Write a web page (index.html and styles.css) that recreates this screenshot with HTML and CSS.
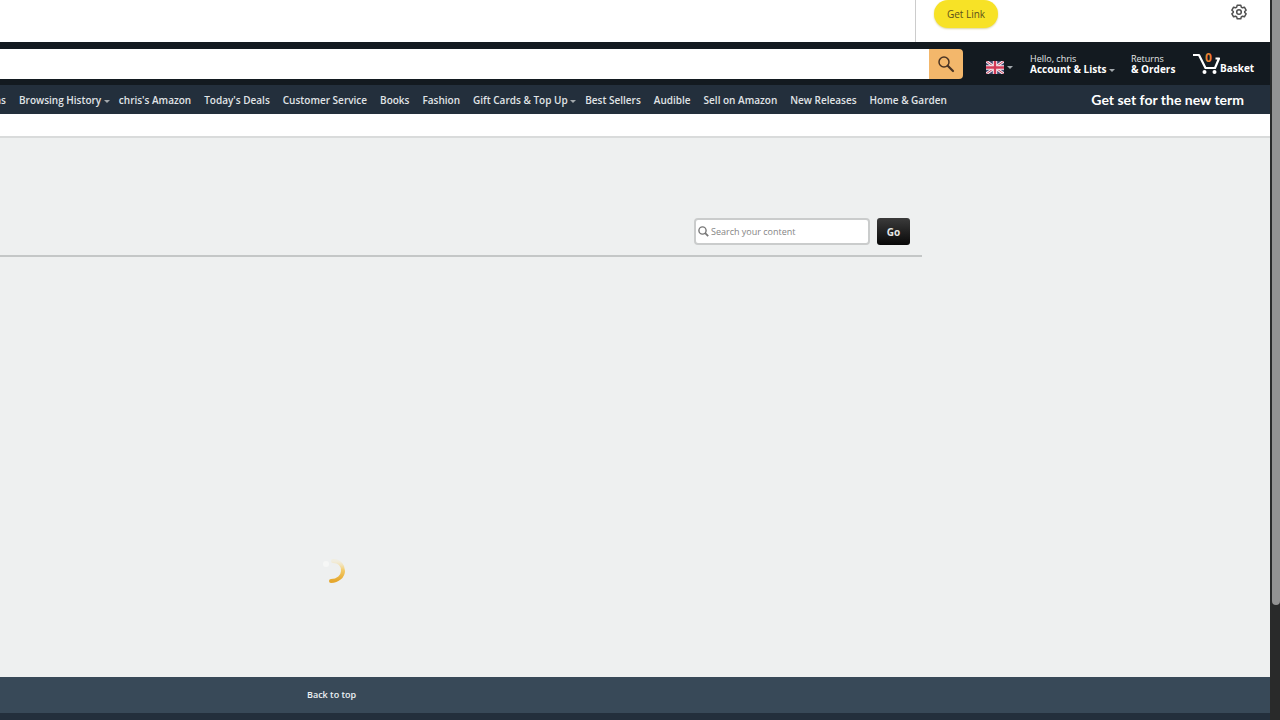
FILE: index.html
```html
<!DOCTYPE html>
<html lang="en">
<head>
<meta charset="utf-8">
<title>Manage Your Content</title>
<link rel="stylesheet" href="styles.css">
</head>
<body>
<div class="page">
  <div class="toolbar">
    <div class="toolbar-panel">
      <button class="get-link" type="button">Get Link</button>
      <button class="icon-button" type="button" aria-label="Settings">
        <svg width="16" height="16" viewBox="0 0 16 16" fill="none" stroke="#505050" stroke-width="1.5" stroke-linejoin="round"><path d="M6.2 1.2h3.6l.5 1.900 1.200.7 1.900-.6 1.700 3-1.400 1.300v1l1.400 1.300-1.700 3-1.900-.6-1.200.7-.5 1.900H6.200l-.5-1.900-1.200-.7-1.900.6-1.700-3 1.400-1.300v-1L.9 6.200l1.700-3 1.900.6 1.200-.7z"/><circle cx="8" cy="8" r="2.300"/></svg>
      </button>
    </div>
  </div>

  <header class="header">
    <form class="search">
      <input class="search-input" type="text" aria-label="Search Amazon">
      <button class="search-button" type="button" aria-label="Search">
        <svg width="18" height="18" viewBox="0 0 18 18" fill="none" stroke="#4a3424"><circle cx="7" cy="7" r="5" stroke-width="1.500"/><path d="M11 11l5 5" stroke-width="2.200" stroke-linecap="round"/></svg>
      </button>
    </form>
    <a class="language" href="#" aria-label="Choose language">
      <svg width="18" height="13" viewBox="0 0 18 13"><path fill="#40476f" d="M0 0h18v13H0z"/><path d="M0 0l18 13M18 0L0 13" stroke="#f3e9ee" stroke-width="3"/><path d="M0 0l18 13M18 0L0 13" stroke="#c64660" stroke-width="1"/><path d="M9 0v13M0 6.500h18" stroke="#f6edf1" stroke-width="4.400"/><path d="M9 0v13M0 6.500h18" stroke="#d23a57" stroke-width="2.400"/></svg>
      <span class="caret"></span>
    </a>
    <a class="tool account" href="#"><span class="tool-top">Hello, chris</span><span class="tool-main">Account &amp; Lists <span class="caret"></span></span></a>
    <a class="tool orders" href="#"><span class="tool-top">Returns</span><span class="tool-main">&amp; Orders</span></a>
    <a class="basket" href="#">
      <span class="cart">
        <svg width="27" height="22" viewBox="0 0 27 22" fill="none" stroke="#fff" stroke-width="2.200" stroke-linejoin="round"><path d="M0 2h6l6.500 13h9.500L26 5.500h-3.500"/><g fill="#fff" stroke="none"><circle cx="11.500" cy="19" r="2"/><circle cx="21.500" cy="19" r="2"/></g></svg>
        <span class="count">0</span>
      </span>
      <span class="basket-label">Basket</span>
    </a>
  </header>

  <nav class="nav">
    <a class="cut" href="#">ns</a>
    <a class="with-caret" href="#">Browsing History <span class="caret"></span></a>
    <a href="#">chris's Amazon</a>
    <a href="#">Today's Deals</a>
    <a href="#">Customer Service</a>
    <a href="#">Books</a>
    <a href="#">Fashion</a>
    <a class="with-caret" href="#">Gift Cards &amp; Top Up <span class="caret"></span></a>
    <a href="#">Best Sellers</a>
    <a href="#">Audible</a>
    <a href="#">Sell on Amazon</a>
    <a href="#">New Releases</a>
    <a href="#">Home &amp; Garden</a>
    <a class="promo" href="#">Get set for the new term</a>
  </nav>

  <div class="subnav"></div>

  <main class="main">
    <form class="content-search">
      <label class="field">
        <svg width="11" height="11" viewBox="0 0 11 11" fill="none" stroke="#777" stroke-width="1.400"><circle cx="4.500" cy="4.500" r="3.600"/><path d="M7.200 7.200l3 3" stroke-width="1.800"/></svg>
        <input class="field-input" type="text" placeholder="Search your content" aria-label="Search your content">
      </label>
      <button class="go" type="button">Go</button>
    </form>
    <div class="loading">
      <svg width="28" height="28" viewBox="0 0 28 28" fill="none" stroke-width="4"><defs><linearGradient id="spin" x1="0" y1="0" x2="0" y2="1"><stop offset="0" stop-color="#f6e6b8" stop-opacity=".3"/><stop offset=".45" stop-color="#f3cb68"/><stop offset="1" stop-color="#e5a72d"/></linearGradient></defs><circle cx="6" cy="7" r="3" fill="#f6f7f6"/><path d="M13 4c7 0 10 5 10 10S18 24 11 24" stroke="url(#spin)" stroke-linecap="round"/></svg>
    </div>
  </main>

  <footer>
    <a class="back-to-top" href="#">Back to top</a>
    <div class="footer-links"></div>
  </footer>
</div>
<div class="scrollbar"><div class="thumb"></div></div>
</body>
</html>
```
FILE: styles.css
```css
* { box-sizing: border-box; }

body {
  margin: 0;
  height: 100vh;
  display: flex;
  overflow: hidden;
  background: #292a2a;
  font-family: "Open Sans", "Noto Sans", sans-serif;
  font-size: 10px;
  line-height: 14px;
}

a { color: inherit; text-decoration: none; }
button, input { font: inherit; border: 0; padding: 0; }
svg { display: block; flex: none; }

.page {
  flex: 1;
  min-width: 0;
  display: flex;
  flex-direction: column;
}

.toolbar {
  height: 42px;
  display: flex;
  justify-content: flex-end;
  background: #fff;
}

.toolbar-panel {
  width: 355px;
  padding: 0 23px 0 18px;
  border-left: 1px solid #ccc;
  display: flex;
  justify-content: space-between;
  align-items: flex-start;
}

.get-link {
  width: 64px;
  height: 28px;
  border-radius: 14px;
  background: #f7e226;
  color: #5b501b;
  box-shadow: 0 1px 2px #ddd69a;
}

.icon-button { padding-top: 4px; background: none; }

.header {
  height: 43px;
  display: flex;
  align-items: center;
  background: #131a20;
  color: #fff;
}

.search {
  flex: 1;
  height: 30px;
  display: flex;
}

.search-input { flex: 1; min-width: 0; background: #fff; }

.search-button {
  width: 34px;
  border-radius: 0 4px 4px 0;
  background: #f3b76b;
  display: flex;
  align-items: center;
  justify-content: center;
}

.caret {
  display: inline-block;
  width: 0;
  height: 0;
  border: 3px solid transparent;
  border-top-color: #a3a9ad;
  border-bottom: 0;
  vertical-align: 1px;
}

.language {
  width: 67px;
  padding: 8px 0 0 23px;
  display: flex;
  align-items: center;
  gap: 3px;
}

.tool { display: flex; flex-direction: column; line-height: 11px; white-space: nowrap; }
.tool-top { font-size: 9px; color: #e4e6e7; }
.tool-main { font-weight: 700; }
.account { width: 101px; }
.orders { width: 62px; }

.basket { width: 77px; display: flex; align-items: center; font-weight: 700; }
.cart { position: relative; }

.count {
  position: absolute;
  left: 12px;
  top: -2px;
  color: #e88132;
  font-size: 12px;
}

.basket-label { padding-top: 9px; }

.nav {
  height: 29px;
  padding-right: 26px;
  display: flex;
  align-items: center;
  gap: 13px;
  background: #232f3c;
  color: #e0e4e7;
  font-weight: 600;
  white-space: nowrap;
  overflow: hidden;
}

.cut { width: 6px; display: flex; justify-content: flex-end; }
.with-caret { margin-right: -4px; }

.promo {
  margin-left: auto;
  color: #fff;
  font-family: Lato, "Open Sans", sans-serif;
  font-size: 14px;
  font-weight: 700;
}

.subnav {
  height: 24px;
  background: #fff;
  border-bottom: 2px solid #d9dbdb;
}

.main {
  flex: 1;
  background: #eef0f0;
}

.content-search {
  margin-right: 348px;
  padding: 80px 12px 10px 0;
  border-bottom: 2px solid #c4c7c7;
  display: flex;
  justify-content: flex-end;
  gap: 7px;
}

.field {
  width: 176px;
  height: 27px;
  padding: 0 2px;
  border: 2px solid #cacccc;
  border-radius: 4px;
  background: #fff;
  display: flex;
  align-items: center;
  gap: 2px;
  font-size: 9px;
}

.field-input { flex: 1; min-width: 0; background: none; }
.field-input::placeholder { color: #858585; opacity: 1; }

.go {
  width: 33px;
  height: 27px;
  border-radius: 3px;
  background: linear-gradient(#3b3b3b, #080808);
  color: #e6e6e6;
  font-weight: 700;
}

.loading { padding: 300px 0 0 320px; }

.back-to-top {
  display: block;
  padding: 11px 0 11px 307px;
  background: #384958;
  color: #edf1f4;
  font-size: 9px;
  font-weight: 600;
}

.footer-links { height: 7px; background: #232f3c; }

.scrollbar {
  width: 10px;
  padding-left: 2px;
}

.thumb {
  height: 84vh;
  border-radius: 0 0 4px 4px;
  background: #929292;
}
```
